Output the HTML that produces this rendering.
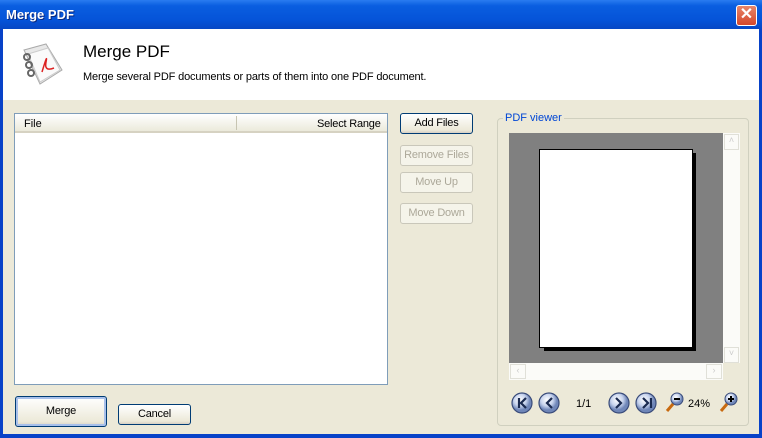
<!DOCTYPE html>
<html><head><style>
*{margin:0;padding:0;box-sizing:border-box}
body{width:762px;height:438px;overflow:hidden;font-family:"Liberation Sans",Tahoma,sans-serif;font-size:11px;position:relative;background:#0842c8}
.abs{position:absolute}
.title{left:0;top:0;width:762px;height:29px;background:linear-gradient(#2a7cf0,#0a5ee0 20%,#0553d8 70%,#0647c4);color:#fff;font-weight:bold;font-size:13px;padding:7px 0 0 6px;text-shadow:1px 1px #0a2a80}
.close{left:736px;top:5px;width:21px;height:21px;background:linear-gradient(#e8866a,#d5472b);border:1px solid #fff;border-radius:3px;color:#fff;font-size:16px;text-align:center;line-height:18px;font-weight:bold}
.frame{left:3px;top:29px;width:756px;height:405px;background:#ece9d8}
.hdr{left:3px;top:29px;width:756px;height:71px;background:#fff}
.btn{position:absolute;border:1px solid #003c74;border-radius:3px;background:linear-gradient(#fff,#ece9d8 85%,#d6d0c5);text-align:center;color:#000;font-size:11px;letter-spacing:-0.2px}
.dis{border-color:#c9c7ba;color:#aca899;background:#f5f4ea}
</style></head><body>
<div class="abs title">Merge PDF</div>
<div class="abs close">✕</div>
<div class="abs frame"></div>
<div class="abs hdr"></div>
<svg class="abs" style="left:18px;top:42px" width="48" height="46">
<path d="M6 8 L28 2 L44 28 L22 42 Z" fill="#e8e8e8" stroke="#aaa"/>
<path d="M10 12 L30 6 L42 28 L22 40 Z" fill="#fafafa" stroke="#ccc"/>
<circle cx="9" cy="15" r="3" fill="none" stroke="#666" stroke-width="2"/>
<circle cx="11" cy="23" r="3" fill="none" stroke="#666" stroke-width="2"/>
<circle cx="13" cy="31" r="3" fill="none" stroke="#666" stroke-width="2"/>
<path d="M24 30 Q30 10 28 20 Q26 30 36 26" fill="none" stroke="#d22" stroke-width="1.5"/>
</svg>
<div class="abs" style="left:83px;top:42px;font-size:17px">Merge PDF</div>
<div class="abs" style="left:83px;top:71px;font-size:11px;letter-spacing:-0.15px">Merge several PDF documents or parts of them into one PDF document.</div>
<div class="abs" style="left:14px;top:113px;width:374px;height:272px;background:#fff;border:1px solid #7f9db9"></div>
<div class="abs" style="left:15px;top:114px;width:372px;height:19px;background:linear-gradient(#fff,#ebeadb);border-bottom:2px solid #d6d2c2"></div>
<div class="abs" style="left:236px;top:116px;width:1px;height:14px;background:#c7c5b2"></div>
<div class="abs" style="left:24px;top:118px">File</div>
<div class="abs" style="left:317px;top:118px;letter-spacing:-0.2px">Select Range</div>
<div class="btn" style="left:400px;top:113px;width:73px;height:21px;line-height:19px">Add Files</div>
<div class="btn dis" style="left:400px;top:145px;width:73px;height:21px;line-height:19px">Remove Files</div>
<div class="btn dis" style="left:400px;top:172px;width:73px;height:21px;line-height:19px">Move Up</div>
<div class="btn dis" style="left:400px;top:203px;width:73px;height:21px;line-height:19px">Move Down</div>
<div class="abs" style="left:497px;top:118px;width:252px;height:308px;border:1px solid #d0d0bf;border-radius:4px"></div>
<div class="abs" style="left:503px;top:112px;background:#ece9d8;color:#0046d5;padding:0 2px">PDF viewer</div>
<div class="abs" style="left:509px;top:133px;width:214px;height:230px;background:#808080"></div>
<div class="abs" style="left:544px;top:153px;width:152px;height:198px;background:#000"></div>
<div class="abs" style="left:539px;top:149px;width:154px;height:199px;background:#fff;border:1px solid #000"></div>
<div class="abs" style="left:723px;top:133px;width:17px;height:230px;background:#fbfbf8"></div>
<div class="abs" style="left:724px;top:134px;width:15px;height:16px;border:1px solid #e0e0d8;color:#ccc;font-size:9px;text-align:center">˄</div>
<div class="abs" style="left:724px;top:347px;width:15px;height:16px;border:1px solid #e0e0d8;color:#ccc;font-size:9px;text-align:center">˅</div>
<div class="abs" style="left:509px;top:363px;width:214px;height:17px;background:#fbfbf8"></div>
<div class="abs" style="left:510px;top:364px;width:16px;height:15px;border:1px solid #e0e0d8;color:#ccc;font-size:9px;text-align:center">‹</div>
<div class="abs" style="left:706px;top:364px;width:16px;height:15px;border:1px solid #e0e0d8;color:#ccc;font-size:9px;text-align:center">›</div>
<svg class="abs" style="left:510px;top:390px" width="240" height="26">
<defs><radialGradient id="g" cx=".4" cy=".35"><stop offset="0" stop-color="#fff"/><stop offset=".6" stop-color="#c8d4ee"/><stop offset="1" stop-color="#6f86b8"/></radialGradient></defs>
<g stroke="#3a4c7a" stroke-width="1.2" fill="url(#g)">
<circle cx="12" cy="13" r="10"/><circle cx="39" cy="13" r="10"/><circle cx="109" cy="13" r="10"/><circle cx="136" cy="13" r="10"/>
</g>
<g stroke="#1a2a50" stroke-width="2.2" fill="none">
<path d="M9 8V18M16 8L11 13L16 18"/><path d="M42 8L37 13L42 18"/><path d="M106 8L111 13L106 18"/><path d="M133 8L138 13L133 18M141 8V18"/>
</g>
<g><circle cx="167" cy="9" r="6" fill="url(#g)" stroke="#3a4c7a"/><path d="M163 14L157 21" stroke="#c86a10" stroke-width="3"/><path d="M164 9H170" stroke="#000" stroke-width="2"/>
<circle cx="221" cy="9" r="6" fill="url(#g)" stroke="#3a4c7a"/><path d="M217 14L211 21" stroke="#c86a10" stroke-width="3"/><path d="M218 9H224M221 6V12" stroke="#000" stroke-width="2"/></g>
<text x="66" y="17" font-family="Liberation Sans" font-size="11">1/1</text>
<text x="178" y="17" font-family="Liberation Sans" font-size="11">24%</text>
</svg>
<div class="btn" style="left:15px;top:396px;width:92px;height:31px;line-height:29px;border-color:#003c74;box-shadow:inset 0 0 0 2px #a8c0ea">Merge</div>
<div class="btn" style="left:118px;top:404px;width:73px;height:21px;line-height:19px">Cancel</div>
</body></html>
